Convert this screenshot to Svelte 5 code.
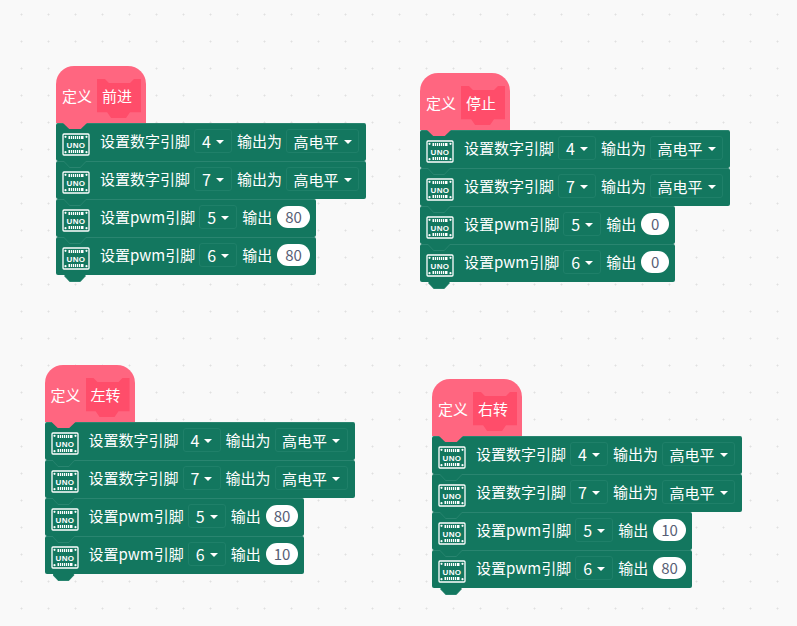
<script>
  const stacks = [
    { x: 56, y: 66, name: '前进', a: '80', b: '80' },
    { x: 420, y: 73, name: '停止', a: '0', b: '0' },
    { x: 44.5, y: 365, name: '左转', a: '80', b: '10' },
    { x: 432, y: 379, name: '右转', a: '10', b: '80' }
  ];
</script>

{#snippet uno()}
  <svg class="uno" width="28" height="23" viewBox="0 0 28 23">
    <rect x="1" y="1" width="26" height="21" rx="1" fill="none" stroke="#fff" stroke-width="1.300" />
    <rect x="6.500" y="3" width="15" height="3" fill="#fff" />
    <rect x="6.500" y="17" width="15" height="3" fill="#fff" />
    <path d="M8.500 3v3M10.500 3v3M12.500 3v3M14.500 3v3M16.500 3v3M18.500 3v3M8.500 17v3M10.500 17v3M12.500 17v3M14.500 17v3M16.500 17v3M18.500 17v3" stroke="#13775f" stroke-width=".8" />
    <circle cx="3.500" cy="3.800" r="1.100" fill="#fff" />
    <circle cx="24.500" cy="3.800" r="1.100" fill="#fff" />
    <circle cx="3.500" cy="19.200" r="1.100" fill="#fff" />
    <circle cx="24.500" cy="19.200" r="1.100" fill="#fff" />
    <text x="14" y="14.500" text-anchor="middle" class="uno-text">UNO</text>
  </svg>
{/snippet}

{#snippet digital(pin)}
  <div class="row">
    {@render uno()}
    <span class="label first">设置数字引脚</span>
    <span class="drop pin">{pin}<i></i></span>
    <span class="label">输出为</span>
    <span class="drop level">高电平<i></i></span>
  </div>
{/snippet}

{#snippet pwm(pin, value)}
  <div class="row">
    {@render uno()}
    <span class="label first">设置pwm引脚</span>
    <span class="drop pin">{pin}<i></i></span>
    <span class="label">输出</span>
    <span class="pill">{value}</span>
  </div>
{/snippet}

<main class="canvas">
  {#each stacks as s}
    <section class="stack" style="left: {s.x}px; top: {s.y}px">
      <div class="hat">
        <span class="def">定义</span>
        <span class="slot">{s.name}</span>
      </div>
      {@render digital('4')}
      {@render digital('7')}
      {@render pwm('5', s.a)}
      {@render pwm('6', s.b)}
    </section>
  {/each}
</main>

<style>
  :global(body) { margin: 0; }
  .canvas {
    position: relative;
    width: 797px;
    height: 626px;
    overflow: hidden;
    background-color: #f9f9f9;
    background-image: radial-gradient(circle at center, #e0e0e0 0.8px, transparent 1.2px);
    background-size: 27px 27px;
    background-position: 8px 1px;
    font-family: "Noto Sans CJK SC", "Noto Sans", sans-serif;
    font-size: 15px;
    color: #fff;
  }
  .stack {
    position: absolute;
    display: flex;
    flex-direction: column;
    align-items: flex-start;
  }
  .hat {
    position: relative;
    z-index: 2;
    width: 90px;
    height: 57px;
    box-sizing: border-box;
    padding: 11px 0 0 6px;
    display: flex;
    align-items: center;
    gap: 5px;
    background: #ff6680;
    border-radius: 18px 18px 0 0;
  }
  .hat::after {
    content: "";
    position: absolute;
    left: 7px;
    bottom: -6px;
    width: 24px;
    height: 6px;
    background: #ff6680;
    clip-path: polygon(0 0, 100% 0, 74% 100%, 26% 100%);
  }
  .def { margin-top: -9px; }
  .slot {
    width: 44px;
    height: 39px;
    margin-top: -3px;
    padding: 0 4px 6px 0;
    box-sizing: border-box;
    display: flex;
    align-items: center;
    justify-content: center;
    background: #ff4d6a;
    clip-path: polygon(0 0, 18% 0, 27% 10%, 75% 10%, 84% 0, 100% 0, 100% 85%, 75% 85%, 66% 100%, 32% 100%, 23% 85%, 0 85%);
  }
  .row {
    position: relative;
    height: 38px;
    padding: 0 6px 4px 6px;
    display: flex;
    align-items: center;
    background: #13775f;
    border-top: 1px solid #2a8570;
    box-sizing: border-box;
    border-radius: 2px;
  }
  .row::before,
  .row::after {
    content: "";
    position: absolute;
    left: 8px;
    width: 22px;
    height: 6px;
    clip-path: polygon(0 0, 100% 0, 74% 100%, 26% 100%);
    z-index: 1;
  }
  .row::before { bottom: -7px; background: #2a8570; }
  .row::after { bottom: -6px; background: #13775f; }
  .uno { flex: none; margin-top: 8px; }
  .uno-text {
    font-family: "Liberation Sans", sans-serif;
    font-size: 8px;
    font-weight: 700;
    letter-spacing: .4px;
    fill: #fff;
  }
  .label { margin-left: 4px; white-space: nowrap; }
  .label.first { margin-left: 10px; }
  .drop {
    display: inline-flex;
    align-items: center;
    justify-content: center;
    gap: 5px;
    height: 24px;
    margin: 1px 1px 0 4px;
    border: 1px solid #1f8069;
    border-radius: 3px;
    box-sizing: border-box;
  }
  .pin { width: 38px; font-size: 16px; }
  .level { width: 73px; }
  .drop i {
    width: 0;
    height: 0;
    margin-top: 1px;
    border-left: 4px solid transparent;
    border-right: 4px solid transparent;
    border-top: 4px solid #fff;
  }
  .pill {
    margin-left: 5px;
    min-width: 28px;
    height: 22px;
    padding: 0 8px;
    box-sizing: border-box;
    display: flex;
    align-items: center;
    justify-content: center;
    background: #fff;
    color: #575e75;
    border-radius: 11px;
  }
</style>
